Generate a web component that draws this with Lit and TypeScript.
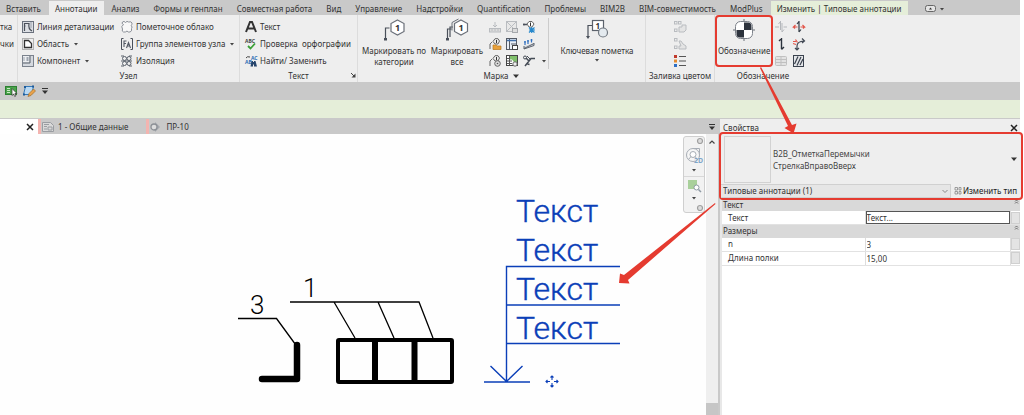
import { LitElement, html, svg, css, nothing, TemplateResult } from "lit";
import { customElement, property } from "lit/decorators.js";
import { classMap } from "lit/directives/class-map.js";

const D = "#4a505a";
const L = "#b9bcc0";

const icons: Record<string, TemplateResult> = {
  detailLine: svg`<rect x=".5" y=".5" width="11" height="11" fill="#dcdfe4" stroke="#6a717d"/><path d="M2.500 10V2.500H7q-1 5.500 3 7.500M2.500 5h1" fill="none" stroke="${D}" stroke-width="1.200"/><path d="M9 1v6" stroke="#9aa1ac"/>`,
  region: svg`<rect x=".5" y=".5" width="11" height="11" fill="none" stroke="#777" stroke-dasharray="1 1"/><path d="M2.500 2.500h4l3 3v4h-7z" fill="#fff" stroke="#333" stroke-width="1.300"/>`,
  component: svg`<rect x=".5" y=".5" width="11" height="11" fill="#d5d9df" stroke="#7b828d"/><path d="M1 8h7V1" fill="none" stroke="#59606b"/><path d="M1 1h6v6H1z" fill="#eceef1"/><path d="M4.500 2h2v4h-2z" fill="#9da4ae"/><path d="M2 2v4" stroke="#9da4ae"/>`,
  cloud: svg`<path d="M2.500 3.500Q0 2.500 1.500 1t3 .5Q6-.5 7.500 1q3-.8 3.500 1t-1 2.500q2 1.500.5 3 .7 3-1.500 3.500-2 .5-3-1-1.500 1.500-3.500 1T1.500 8Q-.5 5.500 2.500 3.500z" fill="#f8f8f8" stroke="#8b9098"/>`,
  group: svg`<path d="M2.500.5h-2v11h2M9.500.5h2v11h-2" fill="none" stroke="${D}"/><path d="M3 9V3h2.500M3 5.500h2M5.500 10l2-5.500 2 5.500M6.200 8h2.600" fill="none" stroke="#555b66" stroke-width="1.100"/>`,
  insulation: svg`<circle cx="3.500" cy="3.500" r="2" fill="none" stroke="#5b626d"/><circle cx="8" cy="3.500" r="2" fill="none" stroke="#5b626d"/><circle cx="3.500" cy="8.500" r="2" fill="none" stroke="#5b626d"/><circle cx="8" cy="8.500" r="2" fill="none" stroke="#5b626d"/><path d="M0 1h3M8 1h3M0 6h11M0 11h3M8 11h3" stroke="#5b626d"/>`,
  textA: svg`<path d="M1 11L5 1h2l4 10M3 7.500h6" fill="none" stroke="#333" stroke-width="2"/>`,
  spell: svg`<text x="0" y="4.500" font-size="5" font-weight="700" fill="#444">ABC</text><path d="M3 8l2.500 2.500L10 5.500" fill="none" stroke="#3aa037" stroke-width="1.800"/>`,
  find: svg`<text x="6" y="4.500" font-size="5" fill="#2f6db5" font-weight="700">AC</text><text x="0" y="9" font-size="5" fill="#2f6db5" font-weight="700">AB</text><path d="M1 3q1-2 4-1" fill="none" stroke="#444"/><path d="M6.500 6h1.500v1h1V6h1.500l1.500 5.500H9V9.500H8v2H5.500z" fill="#26446b"/>`,
  multiTag: svg`<path d="M6 1v5M4 4l2 2 2-2" fill="none" stroke="${L}"/><rect x=".5" y="7.500" width="11" height="3.500" fill="#ddd" stroke="${L}"/><path d="M3 8v2M6 8v2M9 8v2" stroke="${L}"/>`,
  boxOff: svg`<rect x=".5" y=".5" width="10" height="10" fill="#e8e8e8" stroke="${L}"/><path d="M1 1l9 9M10 1L1 10" stroke="${L}"/><rect x="6.500" y="7.500" width="5" height="4" fill="#ddd" stroke="#a5a8ac"/>`,
  tagX: svg`<path d="M0 3.500h4M1 2.500v2" stroke="${D}" stroke-width="1.300"/><path d="M6 .5h3l2 2.500-2 3H6L4 3z" fill="#fff" stroke="#666"/><path d="M7.500 1.500v3.500" stroke="#333"/><path d="M6 6.500l5.500 5M11.500 6.500L6 11.500M8.700 6v6M6 9h6" stroke="#2788cc" stroke-width="1.200"/>`,
  tagLoad: svg`<path d="M1 11V6l2-2M4 3.500L6 .7h3L10.500 3 9 6H6z" fill="none" stroke="#666"/><path d="M7.500 2v3" stroke="#333"/><path d="M4 7h3l1 1h4v3.500H4z" fill="#e8a13c" stroke="#b97a1e" stroke-width=".7"/>`,
  saved: svg`<rect x=".5" y=".5" width="10" height="11" fill="#e9eef5" stroke="#555b66"/><path d="M3.500 1v10M5 6h6" stroke="#555b66"/><path d="M1 2.500h9" stroke="#3f6ea8" stroke-width="1.500"/><rect x="6.500" y="7.500" width="5" height="4" fill="#fff" stroke="#444"/>`,
  beam: svg`<path d="M1 10.500l10-5M1 8v3l10-3.500V5" fill="#d6dae0" stroke="#5b626d"/><path d="M2 7V3M5 6V2M8.500 4.500V1M1 4h2M4 3h2M7.500 2h2" stroke="#2f6fc0" stroke-width="1.200"/>`,
  tagGear: svg`<path d="M1 11V6l2-2M4 3.500L6 .7h3L10.500 3 9 6H6z" fill="none" stroke="#666"/><path d="M7.500 2v3" stroke="#333"/><circle cx="8.500" cy="8.500" r="2.800" fill="#ddd" stroke="#666"/><circle cx="8.500" cy="8.500" r=".8" fill="#555"/>`,
  map: svg`<rect x=".5" y=".5" width="11" height="10" fill="#fff" stroke="#444"/><path d="M4 1h7v6H8L6 4.500H4z" fill="#7fbf6a"/><path d="M1 3.500h3M1 6h5M1 8.500h5M3.500 1v9" stroke="#555"/><circle cx="9" cy="9" r="2.200" fill="#eee" stroke="#666"/>`,
  path: svg`<path d="M2 11l4-5 2-2.500h4M3 3l3 3M4.500 9l2 .5" fill="none" stroke="#444b55" stroke-width="1.500"/><circle cx="2" cy="2.500" r="1.500" fill="none" stroke="#444b55"/><path d="M4 1l3 3" stroke="#444b55"/>`,
  duct: svg`<rect x=".5" y=".5" width="2.500" height="2.500" fill="none" stroke="${L}"/><rect x="4.500" y=".5" width="2.500" height="2.500" fill="none" stroke="${L}"/><rect x=".5" y="8" width="2.500" height="2.500" fill="none" stroke="${L}"/><path d="M5 6h3V4h4v5l-2 2H5z" fill="#e4e4e4" stroke="${L}"/>`,
  pipe: svg`<rect x=".5" y=".5" width="2.500" height="2.500" fill="none" stroke="${L}"/><rect x=".5" y="8" width="2.500" height="2.500" fill="none" stroke="${L}"/><path d="M5 3h2l2 3 3 2v3H5V8h2z" fill="#e4e4e4" stroke="${L}"/>`,
  legend: svg`<path d="M0 0h3v3H0z" fill="#c0392b"/><path d="M0 4.500h3v3H0z" fill="#e58a2c"/><path d="M0 9h3v3H0z" fill="#2e6fc4"/><path d="M5 1.500h7M5 6h7M5 10.500h7" stroke="#555" stroke-width="1.200"/>`,
  spanOff: svg`<path d="M5.500 0v9M7 2v9M5.500.5l-2 2.500M7 11l2-2.500M0 6h4M8.500 6H12" fill="none" stroke="#b4b7bb"/>`,
  spanRed: svg`<path d="M6 0v11M6 .5L4 3M6 11l2-2.500" fill="none" stroke="#333b45" stroke-width="1.200"/><path d="M2.500 4L.5 6h4M9.500 4l2 2h-4M.5 6L2 7.500M11.500 6L10 7.500" fill="none" stroke="#e2564a" stroke-width="1.200"/>`,
  beamSym: svg`<path d="M6.500 0v11M6.500.5L4 3M6.500 11.500L9 9" fill="none" stroke="#2c333d" stroke-width="1.400"/>`,
  stair: svg`<path d="M4 12V8q0-4.500 7-5M9 .5l2.500 2.500L9 5M2 10l2 2 2-2" fill="none" stroke="#434a55" stroke-width="1.200"/><path d="M0 5.500l3 1M2.500 1.500l2 3M0 3.500h3" stroke="#e2564a" stroke-width="1.200"/>`,
  areaOff: svg`<rect x=".5" y="1.500" width="11" height="9" rx="1" fill="#e2e2e2" stroke="#c0c0c0"/><path d="M1 4.500h10M1 7.500h10M6 2v8" stroke="#c0c0c0"/>`,
  hatch: svg`<rect x=".5" y=".5" width="10" height="11" fill="#e4e6e9" stroke="#3a424e"/><path d="M1.500 9L5 1.500M4 10.500L8 2M7 10l3-6" stroke="#3a424e" stroke-width="1.200"/>`,
  select: svg`<rect x=".5" y="1.500" width="11" height="8" fill="#4aa34a" stroke="#2d7f33"/><path d="M2 3.500h3M2 5.500h3M2 7.500h3" stroke="#c8e8c4"/><path d="M7 3.500v7l1.700-1.500 1 2.500 1.200-.5-1-2.500h2z" fill="#fff" stroke="#333" stroke-width=".7"/>`,
  edit: svg`<path d="M2.500 1.500h8l-2 8h-8z" fill="#b9d8f2" stroke="#3378b8"/><path d="M1 2h2M9 1.500h2M0 9.500h2" stroke="#1e5a99" stroke-width="1.800"/><path d="M5 11.500l1-3L10.500 4l2 2L8 10.500z" fill="#e9a24b" stroke="#9b6420" stroke-width=".6"/>`,
  sheet: svg`<path d="M.5 1.500h8l3 3v6H.5z" fill="#d9d9d9" stroke="#9a9da2"/><path d="M2 3.500h5M2 5.500h3M6 6h4v3H6zM2 8h3" fill="none" stroke="#9a9da2"/>`,
  section: svg`<path d="M5 1l5 5-5 5z" fill="#a4a8ad"/><circle cx="4" cy="6" r="3" fill="#ddd" stroke="#8c9096" stroke-width="1.300"/>`,
  wheel: svg`<path d="M8 1.500h6.500V10" fill="none" stroke="#a7adb5"/><circle cx="8" cy="8" r="6.500" fill="#f6f6f6" stroke="#a7adb5"/><circle cx="8" cy="7.500" r="3" fill="#fff" stroke="#a7adb5"/><path d="M3.500 12.500l2.500-3M12.500 12.500l-2.500-3" stroke="#a7adb5"/><text x="9" y="16" font-size="7" font-weight="700" fill="#7fa6c9">2D</text>`,
  zoomRegion: svg`<path d="M1 1h9v9H1z" fill="#a9d09b"/><circle cx="9.500" cy="8.500" r="2.500" fill="#fff" stroke="#8f9aa5"/><path d="M11.500 10.500L14 13" stroke="#8f9aa5" stroke-width="1.500"/>`,
  typeEdit: svg`<path d="M1 .5h2.500v2.500H1zM1 4.500h2.500v2.500H1zM5 .5h2v2.500H5zM5 4.500h2v2.500H5z" fill="none" stroke="#888" stroke-width=".8"/>`,
  tag: svg`<path d="M2.500 20V9h4" fill="none" stroke="${D}" stroke-width="1.200"/><path d="M1 19h3v2.500H1z" fill="${D}"/><path d="M14.500 1l6.500 3.500v8l-6.500 3.500L8 12.500v-8z" fill="#fff" stroke="#6b7079" stroke-width="1.200"/><text x="12" y="12" font-size="9" font-weight="700" fill="#333">1</text>`,
  tagAll: svg`<path d="M1.500 20V10h4M4 18V8h3" fill="none" stroke="${D}" stroke-width="1.200"/><path d="M0 19h3v2.500H0z" fill="${D}"/><path d="M12.500 0L6 3.500v8" fill="none" stroke="#6b7079"/><path d="M15 1l6.500 3.500v8L15 16l-6.500-3.500v-8z" fill="#fff" stroke="#6b7079" stroke-width="1.200"/><text x="12.500" y="12" font-size="9" font-weight="700" fill="#333">1</text>`,
  keynote: svg`<path d="M2 18V6.500h5" fill="none" stroke="${D}" stroke-width="1.200"/><path d="M0 17h4l-2 3z" fill="${D}"/><rect x="6.500" y="1.500" width="11" height="10" fill="#fff" stroke="#5c626c" stroke-width="1.200"/><text x="9.500" y="9.500" font-size="8" font-weight="700" fill="#333">1</text><circle cx="17" cy="13.500" r="4.500" fill="#e4eaef" stroke="#717880" stroke-width="1.200"/>`,
  symbol: svg`<path d="M11 0v22M0 11h22" stroke="#6b7079"/><rect x="2.500" y="2.500" width="17" height="17" rx="5" fill="#fff" stroke="#7d828a"/><path d="M11 3.500h4a3.500 3.500 0 0 1 3.500 3.500v4H11zM11 18.500H7A3.500 3.500 0 0 1 3.500 15v-4H11z" fill="#2d333d"/>`,
  close: svg`<path d="M1 1l6 6M7 1L1 7" stroke="#222" stroke-width="1.500"/>`,
  down: svg`<path d="M1 2.500h6L4 6z" fill="#333"/>`,
  barDown: svg`<path d="M1 1.500h6" stroke="#333"/><path d="M1 3.500h6L4 7z" fill="#333"/>`,
  smallDown: svg`<path d="M2 3h4L4 5.500z" fill="#444"/>`,
  launcher: svg`<path d="M2 2l3 3" stroke="#444"/><path d="M6.500 2.500v4h-4z" fill="#444"/>`,
  up: svg`<path d="M1.500 5.500L4 3l2.500 2.500" fill="none" stroke="#444" stroke-width="1.200"/>`,
  fold: svg`<path d="M3 2.500L4.500 1 6 2.500M3 4.500L4.500 3 6 4.500" fill="none" stroke="#555" stroke-width=".8"/>`,
  chevron: svg`<path d="M1.500 3L4 5.500 6.500 3" fill="none" stroke="#888"/>`,
  dot: svg`<circle cx="4" cy="4" r="2.500" fill="#ddd" stroke="#a0a0a0" stroke-width="1.200"/>`,
  ribbonToggle: svg`<rect x=".5" y="1.500" width="10" height="6" rx="2" fill="#e4e4e4" stroke="#666"/><path d="M4 5.500h3L5.500 3.500z" fill="#333"/>`,
};

const icon = (name: string, w = 12, h = w) =>
  html`<svg class="ic" width=${w} height=${h} viewBox="0 0 ${w} ${h}" aria-hidden="true">${icons[name]}</svg>`;

const base = css`
  * { box-sizing: border-box; }
  button, input, select {
    font: inherit; color: inherit; background: none; border: 0; margin: 0; padding: 0; border-radius: 0;
  }
  .ic { display: block; flex: none; overflow: visible; }
`;

@customElement("ribbon-panel")
class RibbonPanel extends LitElement {
  @property() label = "";
  @property() mark = "";
  static styles = [base, css`
    :host { display: flex; flex-direction: column; border-right: 1px solid #dcdcdc; flex: none; }
    :host(:last-child) { border-right: 0; }
    .body { display: flex; height: 54px; padding-top: 3px; }
    .title { display: flex; align-items: center; justify-content: center; gap: 3px; height: 13px; position: relative; white-space: nowrap; }
    .corner { position: absolute; right: 0; top: 2px; }
  `];
  render() {
    return html`<div class="body"><slot></slot></div>
      <div class="title">${this.label}
        ${this.mark === "down" ? icon("down", 8) : nothing}
        ${this.mark === "launcher" ? html`<button class="corner" aria-label="Параметры">${icon("launcher", 8)}</button>` : nothing}
      </div>`;
  }
}

@customElement("property-palette")
class PropertyPalette extends LitElement {
  private groups = [
    { name: "Текст", rows: [{ k: "Текст", v: "Текст...", active: true }] },
    { name: "Размеры", rows: [{ k: "n", v: "3", active: false }, { k: "Длина полки", v: "15,00", active: false }] },
  ];
  static styles = [base, css`
    :host { display: flex; flex-direction: column; background: #fff; border-left: 2px solid #c9c9c9; }
    .head { display: flex; justify-content: space-between; align-items: center; height: 15px; padding: 2px 2px 0 3px; background: #eee; }
    .picker { border-radius: 2px; outline: 2px solid #e53b30; background: #eee; margin: 0 -1px 0 1px; position: relative; }
    .type { display: flex; align-items: center; width: 100%; height: 50px; padding: 1px 3px 1px 3px; gap: 2px; text-align: left; line-height: 12px; color: #444; }
    .thumb { width: 47px; height: 47px; border: 1px solid #d2d2d2; }
    .names { flex: 1; padding-top: 2px; }
    .filter { display: flex; align-items: center; height: 14px; gap: 3px; }
    .combo { flex: 1; position: relative; }
    select { appearance: none; width: 100%; height: 14px; padding-left: 2px; background: #e6e6e6; border: 1px solid #d0d0d0; border-left: 0; }
    .combo .ic { position: absolute; right: 2px; top: 3px; pointer-events: none; }
    .edit { display: flex; align-items: center; gap: 1px; padding-right: 4px; white-space: nowrap; color: #222; }
    .props { border-left: 2px solid #e8e8e8; flex: 1; }
    table { width: 100%; border-collapse: collapse; table-layout: fixed; line-height: 12px; }
    .c-name { width: 48%; }
    .c-btn { width: 10px; }
    th, td { padding: 0; font-weight: 400; text-align: left; height: 13px; }
    .group th { background: #d9d9d9; padding-left: 1px; }
    .fold { display: flex; justify-content: space-between; }
    .row th { padding-left: 6px; border-bottom: 1px solid #e2e2e2; }
    .row td { border-bottom: 1px solid #e2e2e2; border-left: 1px solid #ddd; }
    input { display: block; width: 100%; height: 13px; padding-left: 1px; }
    .active { outline: 1px solid #555; outline-offset: -1px; }
    .more { display: block; width: 100%; height: 12px; background: #e4e4e4; border: 1px solid #d0d0d0; }
  `];
  render() {
    return html`
      <div class="head"><span>Свойства</span><button aria-label="Закрыть">${icon("close", 8)}</button></div>
      <div class="picker">
        <button class="type"><span class="thumb"></span>
          <span class="names">B2B_ОтметкаПеремычки<br>СтрелкаВправоВверх</span>${icon("down", 8)}</button>
        <div class="filter">
          <div class="combo"><select aria-label="Категория"><option>Типовые аннотации (1)</option></select>${icon("chevron", 8)}</div>
          <button class="edit">${icon("typeEdit", 8)}Изменить тип</button>
        </div>
      </div>
      <div class="props"><table>
        <colgroup><col class="c-name"><col><col class="c-btn"></colgroup>
        ${this.groups.map((g, gi) => html`
          <tbody>
            <tr class="group"><th colspan="3"><span class="fold">${g.name}${icon("fold", 8)}</span></th></tr>
            ${g.rows.map((r, ri) => html`<tr class="row">
              <th><label for="p${gi}${ri}">${r.k}</label></th>
              <td><input id="p${gi}${ri}" class=${classMap({ active: r.active })} .value=${r.v}></td>
              <td><button class="more" aria-label="Связать параметр"></button></td>
            </tr>`)}
          </tbody>`)}
      </table></div>`;
  }
}

@customElement("drawing-view")
class DrawingView extends LitElement {
  static styles = [base, css`
    :host { display: flex; position: relative; background: #fefefe; overflow: hidden; }
    .sheet { flex: 1; min-width: 0; }
    .drawing { display: block; }
    .note { font-family: Roboto, sans-serif; font-weight: 300; }
    .nav { position: absolute; right: 13px; top: 2px; width: 22px; height: 77px; display: flex; flex-direction: column; align-items: center; justify-content: space-between; background: #f2f2f2; border: 1px solid #cfcfcf; border-radius: 3px; }
    .end { align-self: flex-end; }
    .rule { width: 100%; border-top: 1px solid #d8d8d8; }
    .scroll { width: 12px; display: flex; flex-direction: column; align-items: center; justify-content: space-between; background: #efefef; padding-top: 4px; }
    .thumb { width: 100%; height: 12px; background: #c6c6c6; }
  `];
  render() {
    const rows = [88, 127, 166, 205];
    return html`
      <div class="sheet">
        <svg class="drawing note" width="700" height="281" viewBox="0 0 700 281">
          <g fill="none" stroke="#000" stroke-width="1.300">
            <path d="M290 168h129l14 36M334 168l21 36M378 168l16 36M238 184.500h38.500l19 26"/>
          </g>
          <path d="M297 211v34h-35" fill="none" stroke="#000" stroke-width="6.500" stroke-linecap="round" stroke-linejoin="round"/>
          <rect x="338" y="206" width="114" height="42" rx="1" fill="none" stroke="#000" stroke-width="4"/>
          <path d="M375 206v42M414.500 206v42" stroke="#000" stroke-width="6"/>
          <text x="303" y="163" font-size="26">1</text>
          <text x="250" y="180" font-size="26">3</text>
          <g fill="#0b3fb8" stroke="#0b3fb8" stroke-width=".4" font-size="32">
            ${rows.map((y) => svg`<text x="516" y=${y}>Текст</text>`)}
          </g>
          <g fill="none" stroke="#0b3fb8" stroke-width="1.400">
            <path d="M620 132.500H506.500V247.500M506.500 171H620M506.500 209.500H620M484 248h46M490.500 232l16 15.500 16-15.500"/>
            <path d="M552 242v4M552 249v4M546 247.500h4M554 247.500h4M550.500 243.500l1.500-1.500 1.500 1.500M550.500 251.500l1.500 1.500 1.500-1.500M547.500 246l-1.500 1.500 1.500 1.500M556.500 246l1.500 1.500-1.500 1.500" stroke-width="1.100"/>
          </g>
        </svg>
      </div>
      <div class="scroll">${icon("up", 8)}<span class="thumb"></span></div>
      <div class="nav">
        <span class="end">${icon("dot", 8)}</span>${icon("wheel", 18)}${icon("smallDown", 8)}
        <span class="rule"></span>${icon("zoomRegion", 14)}${icon("smallDown", 8)}<span class="end">${icon("dot", 8)}</span>
      </div>`;
  }
}

@customElement("app-root")
class AppRoot extends LitElement {
  private tabs = ["Вставить", "Аннотации", "Анализ", "Формы и генплан", "Совместная работа", "Вид", "Управление",
    "Надстройки", "Quantification", "Проблемы", "BIM2B", "BIM-совместимость", "ModPlus", "Изменить | Типовые аннотации"];
  static styles = [base, css`
    :host { display: flex; flex-direction: column; position: relative; min-height: 100vh; padding-right: 4px; overflow: hidden; background: #fff; color: #333; font: 8px/12px "Noto Sans", "Open Sans", sans-serif; }
    .tabs { display: flex; height: 15px; padding-top: 1px; background: #c9c9c9; }
    .tab { padding: 1px 7px 0 6px; margin-right: 1px; white-space: nowrap; }
    .on { background: #eee; }
    .context { background: #e5eed9; }
    .toggle { display: flex; align-items: center; gap: 1px; margin-left: 16px; padding-top: 1px; }
    .ribbon { display: flex; height: 67px; background: #eee; }
    .cut { width: 17px; display: flex; }
    .col { display: flex; flex-direction: column; }
    .cmd { display: flex; align-items: center; height: 17px; gap: 3px; white-space: pre; }
    .p-node { width: 221px; padding-left: 4px; gap: 7px; display: flex; }
    .c1 { width: 92px; }
    .p-text { width: 117px; padding-left: 5px; }
    .p-tag { width: 287px; display: flex; padding-left: 3px; }
    .p-fill { width: 68px; align-items: center; }
    .p-sym { width: 96px; display: flex; padding-left: 3px; gap: 5px; }
    .big { display: flex; flex-direction: column; align-items: center; gap: 4px; padding-top: 1px; line-height: 11px; height: 51px; white-space: nowrap; }
    .b1 { width: 66px; }
    .b2 { width: 60px; }
    .grid { display: grid; grid-template-columns: repeat(3, 17px) 8px; grid-auto-rows: 17px; align-items: center; padding-left: 2px; }
    .pair { display: grid; grid-template-columns: repeat(2, 18px); grid-auto-rows: 17px; align-items: center; }
    .key { flex: 1; border-left: 1px solid #ccc; gap: 4px; }
    .key .ic:last-child { margin-top: -4px; }
    .marked { width: 56px; outline: 2px solid #e53b30; outline-offset: 1px; border-radius: 1px; height: 46px; }
    .quick { display: flex; align-items: center; gap: 6px; height: 18px; padding-left: 5px; background: #c9c9c9; }
    .options { height: 18px; background: #e5eed9; }
    .work { display: flex; flex: 1; border-top: 1px solid #c9c9c9; }
    .main { flex: 1; min-width: 0; display: flex; flex-direction: column; }
    .docs { display: flex; align-items: center; height: 15px; background: #c9c9c9; }
    .blank { display: flex; align-items: center; justify-content: flex-end; width: 38px; height: 15px; padding-right: 4px; background: #fff; }
    .doc { display: flex; align-items: center; gap: 4px; height: 15px; padding: 1px 18px 0 1px; border-left: 3px solid #f3b4b0; }
    .list { margin-left: auto; padding-right: 2px; }
    drawing-view { flex: 1; }
    property-palette { width: 302px; }
    .callouts { position: absolute; left: 0; top: 0; pointer-events: none; }
  `];

  private cmd(name: string, text: string, drop = false) {
    return html`<button class="cmd">${icon(name)}<span>${text}</span>${drop ? icon("smallDown", 8) : nothing}</button>`;
  }
  private small(name: string, label: string) {
    return html`<button aria-label=${label}>${icon(name)}</button>`;
  }

  render() {
    return html`
      <nav class="tabs">
        ${this.tabs.map((t, i) => html`<button class=${classMap({ tab: true, on: i === 1, context: i === 13 })}>${t}</button>`)}
        <button class="toggle" aria-label="Свернуть ленту">${icon("ribbonToggle", 12, 9)}${icon("smallDown", 8)}</button>
      </nav>
      <div class="ribbon">
        <ribbon-panel>
          <div class="cut"><div class="col"><button class="cmd">тка</button><button class="cmd">чки</button></div></div>
        </ribbon-panel>
        <ribbon-panel label="Узел">
          <div class="p-node">
            <div class="col c1">${this.cmd("detailLine", "Линия детализации")}${this.cmd("region", "Область", true)}${this.cmd("component", "Компонент", true)}</div>
            <div class="col">${this.cmd("cloud", "Пометочное облако")}${this.cmd("group", "Группа элементов узла", true)}${this.cmd("insulation", "Изоляция")}</div>
          </div>
        </ribbon-panel>
        <ribbon-panel label="Текст" mark="launcher">
          <div class="col p-text">${this.cmd("textA", "Текст")}${this.cmd("spell", "Проверка  орфографии")}${this.cmd("find", "Найти/ Заменить")}</div>
        </ribbon-panel>
        <ribbon-panel label="Марка" mark="down">
          <div class="p-tag">
            <button class="big b1">${icon("tag", 22)}<span>Маркировать по<br>категории</span></button>
            <button class="big b2">${icon("tagAll", 22)}<span>Маркировать<br>все</span></button>
            <div class="grid">
              ${this.small("multiTag", "Мультимарка")}${this.small("boxOff", "Марка материала")}${this.small("tagX", "Марка с выноской")}<span></span>
              ${this.small("tagLoad", "Загруженные марки")}${this.small("saved", "Марка помещения")}${this.small("beam", "Аннотации балок")}<span></span>
              ${this.small("tagGear", "Параметры марок")}${this.small("map", "Марка зоны")}${this.small("path", "Армирование")}${icon("smallDown", 8)}
            </div>
            <button class="big key">${icon("keynote", 22)}<span>Ключевая пометка</span>${icon("smallDown", 8)}</button>
          </div>
        </ribbon-panel>
        <ribbon-panel label="Заливка цветом">
          <div class="col p-fill">
            <button class="cmd" aria-label="Воздуховоды">${icon("duct")}</button>
            <button class="cmd" aria-label="Трубы">${icon("pipe")}</button>
            <button class="cmd" aria-label="Легенда">${icon("legend")}</button>
          </div>
        </ribbon-panel>
        <ribbon-panel label="Обозначение">
          <div class="p-sym">
            <button class="big marked">${icon("symbol", 22)}<span>Обозначение</span></button>
            <div class="pair">
              ${this.small("spanOff", "Направление пролета")}${this.small("spanRed", "Пролет")}
              ${this.small("beamSym", "Балка")}${this.small("stair", "Траектория лестницы")}
              ${this.small("areaOff", "Площадь")}${this.small("hatch", "Армирование по площади")}
            </div>
          </div>
        </ribbon-panel>
      </div>
      <div class="quick">${this.small("select", "Выбор")}${this.small("edit", "Редактировать")}<button aria-label="Настроить панель">${icon("barDown", 8)}</button></div>
      <div class="options"></div>
      <div class="work">
        <main class="main">
          <div class="docs">
            <div class="blank"><button aria-label="Закрыть вид">${icon("close", 8)}</button></div>
            <button class="doc">${icon("sheet")}1 - Общие данные</button>
            <button class="doc">${icon("section")}ПР-10</button>
            <button class="list" aria-label="Список видов">${icon("barDown", 8)}</button>
          </div>
          <drawing-view></drawing-view>
        </main>
        <property-palette></property-palette>
      </div>
      <svg class="callouts" width="1024" height="415" viewBox="0 0 1024 415" aria-hidden="true">
        <path d="M760 68l1-1 31 58 4.500-1.500-3 10-9-5.500 3.500-2z" fill="#e53b30"/>
        <path d="M715 203l.5 1-87.500 76 1.500 3.500-10.500-.5 1-9.500 4 1.500z" fill="#e53b30"/>
      </svg>`;
  }
}
